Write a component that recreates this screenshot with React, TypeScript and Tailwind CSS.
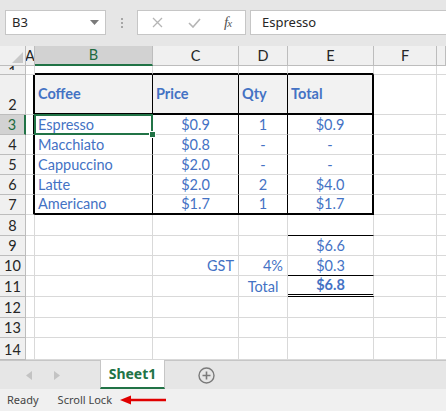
import React from "react";

type Cell = {
  text?: string;
  align?: "left" | "center" | "right";
  bold?: boolean;
  middle?: boolean;
  cls: string;
  active?: boolean;
};

type Row = { num: string; h: string; selected?: boolean; cells: Cell[] };

// gridline pieces
const rG = "border-r border-r-[#d9d9d9]";
const bG = "border-b border-b-[#d9d9d9]";
const rB = "border-r border-r-black";
const rT = "border-r-2 border-r-black";
const bB = "border-b border-b-black";
const bT = "border-b-2 border-b-black";
const bD = "border-b-[3px] border-double border-b-black";
const hdr = "bg-[#f2f2f2]";

const plain = (): Cell[] => [
  { cls: `${rG} ${bG}` },
  { cls: `${rG} ${bG}` },
  { cls: `${rG} ${bG}` },
  { cls: `${rG} ${bG}` },
  { cls: `${rG} ${bG}` },
  { cls: `${rG} ${bG}` },
  { cls: `${bG}` },
];

const item = (name: string, price: string, qty: string, total: string, last = false, active = false): Cell[] => [
  { cls: `${rT} ${bG}` },
  { text: name, align: "left", cls: `${rB} ${last ? bT : bG}`, active },
  { text: price, align: "center", cls: `${rB} ${last ? bT : bG}` },
  { text: qty, align: "center", cls: `${rB} ${last ? bT : bG}` },
  { text: total, align: "center", cls: `${rT} ${last ? bT : bG}` },
  { cls: `${rG} ${bG}` },
  { cls: `${bG}` },
];

const rows: Row[] = [
  {
    num: "1",
    h: "h-[9px]",
    cells: [
      { cls: `${rG} ${bG}` },
      { cls: `${rG} ${bT}` },
      { cls: `${rG} ${bT}` },
      { cls: `${rG} ${bT}` },
      { cls: `${rG} ${bT}` },
      { cls: `${rG} ${bG}` },
      { cls: `${bG}` },
    ],
  },
  {
    num: "2",
    h: "h-[40px]",
    cells: [
      { cls: `${rT} ${bG}` },
      { text: "Coffee", bold: true, middle: true, align: "left", cls: `${rB} ${bT} ${hdr}` },
      { text: "Price", bold: true, middle: true, align: "left", cls: `${rB} ${bT} ${hdr}` },
      { text: "Qty", bold: true, middle: true, align: "left", cls: `${rB} ${bT} ${hdr}` },
      { text: "Total", bold: true, middle: true, align: "left", cls: `${rT} ${bT} ${hdr}` },
      { cls: `${rG} ${bG}` },
      { cls: `${bG}` },
    ],
  },
  { num: "3", h: "h-[20px]", selected: true, cells: item("Espresso", "$0.9", "1", "$0.9", false, true) },
  { num: "4", h: "h-[20px]", cells: item("Macchiato", "$0.8", "-", "-") },
  { num: "5", h: "h-[20px]", cells: item("Cappuccino", "$2.0", "-", "-") },
  { num: "6", h: "h-[20px]", cells: item("Latte", "$2.0", "2", "$4.0") },
  { num: "7", h: "h-[20px]", cells: item("Americano", "$1.7", "1", "$1.7", true) },
  {
    num: "8",
    h: "h-[21px]",
    cells: [
      { cls: `${rG} ${bG}` },
      { cls: `${rG} ${bG}` },
      { cls: `${rG} ${bG}` },
      { cls: `${rG} ${bG}` },
      { cls: `${rG} ${bB}` },
      { cls: `${rG} ${bG}` },
      { cls: `${bG}` },
    ],
  },
  {
    num: "9",
    h: "h-[20px]",
    cells: [
      { cls: `${rG} ${bG}` },
      { cls: `${rG} ${bG}` },
      { cls: `${rG} ${bG}` },
      { cls: `${rG} ${bG}` },
      { text: "$6.6", align: "center", cls: `${rG} ${bG}` },
      { cls: `${rG} ${bG}` },
      { cls: `${bG}` },
    ],
  },
  {
    num: "10",
    h: "h-[20px]",
    cells: [
      { cls: `${rG} ${bG}` },
      { cls: `${rG} ${bG}` },
      { text: "GST", align: "right", cls: `${rG} ${bG}` },
      { text: "4%", align: "right", cls: `${rG} ${bG}` },
      { text: "$0.3", align: "center", cls: `${rG} ${bB}` },
      { cls: `${rG} ${bG}` },
      { cls: `${bG}` },
    ],
  },
  {
    num: "11",
    h: "h-[21px]",
    cells: [
      { cls: `${rG} ${bG}` },
      { cls: `${rG} ${bG}` },
      { cls: `${rG} ${bG}` },
      { text: "Total", align: "center", cls: `${rG} ${bG}` },
      { text: "$6.8", bold: true, align: "center", cls: `${rG} ${bD}` },
      { cls: `${rG} ${bG}` },
      { cls: `${bG}` },
    ],
  },
  { num: "12", h: "h-[21px]", cells: plain() },
  { num: "13", h: "h-[20px]", cells: plain() },
  { num: "14", h: "h-[22px]", cells: plain() },
];

const alignCls = {
  left: "justify-start pl-[3px]",
  center: "justify-center",
  right: "justify-end pr-[4px]",
};

function GridCell({ cell }: { cell: Cell }) {
  return (
    <div
      className={`relative flex ${cell.middle ? "items-center" : "items-end"} ${cell.cls} ${alignCls[cell.align ?? "left"]}`}
    >
      {cell.text && (
        <span className={`leading-[18px] whitespace-nowrap text-[#4472c4] ${cell.bold ? "font-bold" : ""}`}>
          {cell.text}
        </span>
      )}
      {cell.active && (
        <>
          <div className="absolute -top-[1px] -left-[1px] -right-[1px] -bottom-[1px] border-2 border-[#217346] z-10" />
          <div className="absolute -right-[4px] -bottom-[4px] w-[7px] h-[7px] bg-[#217346] border border-white z-20" />
        </>
      )}
    </div>
  );
}

const cols = ["A", "B", "C", "D", "E", "F", ""];

export default function App() {
  return (
    <div className="w-[446px] h-[411px] overflow-hidden flex flex-col bg-white font-['Noto_Sans',sans-serif] text-[13px] text-[#262626]">
      {/* formula bar */}
      <div className="h-[46px] shrink-0 bg-[#e6e6e6] flex items-start pt-[10px] pl-[5px]">
        <div className="w-[101px] h-[25px] bg-white border border-[#c6c6c6] flex items-center justify-between pl-[6px] pr-[6px]">
          <span>B3</span>
          <svg width="9" height="5" viewBox="0 0 9 5">
            <path d="M0 0h9L4.5 5z" fill="#7a7a7a" />
          </svg>
        </div>
        <div className="w-[31px] h-[25px] flex flex-col items-center justify-center gap-[2px]">
          <span className="w-[2px] h-[2px] bg-[#a6a6a6]" />
          <span className="w-[2px] h-[2px] bg-[#a6a6a6]" />
          <span className="w-[2px] h-[2px] bg-[#a6a6a6]" />
        </div>
        <div className="w-[109px] h-[25px] bg-white border border-[#c6c6c6] flex items-center pl-[14px]">
          <svg width="11" height="11" viewBox="0 0 11 11">
            <path d="M1 1l9 9M10 1l-9 9" stroke="#b5b5b5" strokeWidth="1.3" />
          </svg>
          <svg className="ml-[25px]" width="13" height="10" viewBox="0 0 13 10">
            <path d="M1 5l4 4 7-8" stroke="#b5b5b5" strokeWidth="1.6" fill="none" />
          </svg>
          <span className="ml-[23px] italic font-['Liberation_Serif',serif] text-[15px] text-[#555] tracking-[-1px]">
            f<span className="text-[11px]">x</span>
          </span>
        </div>
        <div className="ml-[4px] flex-1 h-[25px] bg-white border border-r-0 border-[#c6c6c6] flex items-center pl-[11px]">
          Espresso
        </div>
      </div>

      {/* sheet */}
      <div className="h-[314px] shrink-0 grid grid-cols-[26px_9px_118px_86px_49px_86px_63px_1fr] content-start font-['Lato',sans-serif] text-[14.5px]">
        {/* column headers */}
        <div className="h-[20px] bg-[#f0f0f0] border-r border-b border-[#bdbdbd] flex items-end justify-end p-[2px]">
          <svg width="11" height="11" viewBox="0 0 11 11">
            <path d="M11 0v11H0z" fill="#c9c9c9" />
          </svg>
        </div>
        {cols.map((c) =>
          c === "B" ? (
            <div
              key={c}
              className="h-[20px] bg-[#d2d2d2] border-r border-r-[#bdbdbd] border-b-2 border-b-[#217346] flex items-center justify-center text-[#1e6b40]"
            >
              {c}
            </div>
          ) : (
            <div
              key={c || "G"}
              className="h-[20px] bg-[#f0f0f0] border-r border-b border-[#bdbdbd] flex items-center justify-center overflow-hidden"
            >
              {c}
            </div>
          )
        )}

        {rows.map((r) => (
          <React.Fragment key={r.num}>
            {r.selected ? (
              <div className={`${r.h} bg-[#d2d2d2] border-r-2 border-r-[#217346] border-b border-b-[#bdbdbd] flex items-end justify-center text-[#1e6b40]`}>
                <span className="leading-[18px]">{r.num}</span>
              </div>
            ) : r.num === "1" ? (
              <div className={`${r.h} bg-[#f0f0f0] border-r border-b border-[#bdbdbd] flex justify-center overflow-hidden`}>
                <div className="h-[4px] overflow-hidden">
                  <span className="block leading-[14px] -mt-[1px]">1</span>
                </div>
              </div>
            ) : (
              <div className={`${r.h} bg-[#f0f0f0] border-r border-b border-[#bdbdbd] flex items-end justify-center`}>
                <span className="leading-[18px]">{r.num}</span>
              </div>
            )}
            {r.cells.map((cell, i) => (
              <GridCell key={i} cell={cell} />
            ))}
          </React.Fragment>
        ))}
      </div>

      {/* sheet tabs */}
      <div className="h-[29px] shrink-0 bg-[#e6e6e6] border-t border-[#c6c6c6] flex items-stretch">
        <div className="w-[100px] flex items-center pl-[26px] gap-[22px]">
          <svg width="6" height="9" viewBox="0 0 6 9">
            <path d="M6 0v9L0 4.5z" fill="#c3c3c3" />
          </svg>
          <svg width="6" height="9" viewBox="0 0 6 9">
            <path d="M0 0v9l6-4.5z" fill="#c3c3c3" />
          </svg>
        </div>
        <div className="w-[65px] -mt-[1px] bg-white border-x border-[#c6c6c6] border-b-2 border-b-[#217346] flex items-center justify-center font-bold text-[14px] text-[#217346]">
          Sheet1
        </div>
        <div className="pl-[33px] flex items-center">
          <svg width="17" height="17" viewBox="0 0 17 17">
            <circle cx="8.5" cy="8.5" r="7.5" fill="none" stroke="#7a7a7a" strokeWidth="1.4" />
            <path d="M8.5 4.5v8M4.5 8.5h8" stroke="#7a7a7a" strokeWidth="1.6" />
          </svg>
        </div>
      </div>

      {/* status bar */}
      <div className="flex-1 bg-[#f0f0f0] flex items-center pl-[7px] text-[11px] text-[#444]">
        <span>Ready</span>
        <span className="ml-[19px]">Scroll Lock</span>
        <svg className="ml-[8px]" width="46" height="10" viewBox="0 0 46 10">
          <path d="M10 5h36" stroke="#e00000" strokeWidth="2.5" />
          <path d="M0 5l11-4.5v9z" fill="#e00000" />
        </svg>
      </div>
    </div>
  );
}
